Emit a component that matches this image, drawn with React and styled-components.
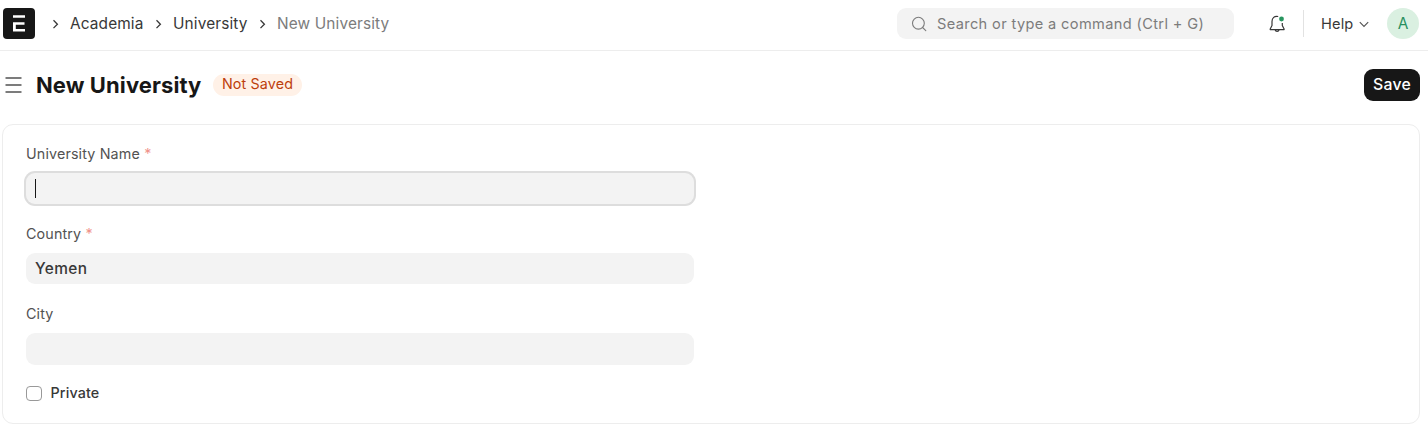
import React from "react";
import styled, { createGlobalStyle } from "styled-components";

const Global = createGlobalStyle`
  * { box-sizing: border-box; }
  body {
    margin: 0;
    background: #fff;
    color: #383838;
    font-family: Inter, "Liberation Sans", sans-serif;
    font-size: 14.3px;
    letter-spacing: 0.15px;
    line-height: 20px;
  }
`;

const Page = styled.div`
  width: 100%;
  min-height: 432px;
  overflow: hidden;
`;

const Navbar = styled.header`
  display: flex;
  align-items: center;
  height: 51px;
  padding: 0 9px 4px 3px;
  border-bottom: 1px solid #ededed;
`;

const Logo = styled.svg`
  display: block;
  width: 32px;
  height: 31px;
`;

const Crumbs = styled.nav`
  display: flex;
  align-items: center;
  margin-left: 17px;
  padding-top: 1px;
  font-size: 15.4px;
  letter-spacing: 0.13px;
`;

const Crumb = styled.span`
  display: flex;
  align-items: center;
  width: ${(p) => p.$width};
  white-space: nowrap;
  color: ${(p) => (p.$current ? "#7c7c7c" : "#383838")};
`;

const CrumbArrow = styled.svg`
  width: 7px;
  height: 10px;
  margin-right: 11px;
  flex: none;
`;

const SearchBox = styled.div`
  display: flex;
  align-items: center;
  width: 337px;
  height: 31px;
  margin-left: auto;
  padding: 1px 0 0 14px;
  border-radius: 9px;
  background: #f3f3f3;
  color: #7c7c7c;
  font-size: 14.6px;
  letter-spacing: 0.36px;
  white-space: nowrap;
`;

const SearchIcon = styled.svg`
  width: 16px;
  height: 16px;
  margin-right: 10px;
`;

const Bell = styled.svg`
  width: 18px;
  height: 20px;
  margin: 2px 0 0 34px;
`;

const Divider = styled.div`
  width: 1px;
  height: 27px;
  margin: 0 17px 0 17px;
  background: #e2e2e2;
`;

const HelpMenu = styled.div`
  display: flex;
  align-items: center;
  width: 66px;
  padding-top: 1px;
  font-size: 14.6px;
`;

const HelpArrow = styled.svg`
  width: 10px;
  height: 7px;
  margin: 2px 0 0 6px;
`;

const Avatar = styled.div`
  width: 32px;
  height: 31px;
  border-radius: 50%;
  background: #daf0e1;
  color: #278f5e;
  font-size: 15.4px;
  line-height: 31px;
  text-align: center;
  letter-spacing: 0;
`;

const PageHead = styled.div`
  display: flex;
  align-items: center;
  height: 73px;
  padding: 0 8px 5px 5px;
`;

const MenuIcon = styled.svg`
  width: 17px;
  height: 18px;
  margin-right: 14px;
`;

const Title = styled.h1`
  margin: 0;
  width: 177px;
  color: #171717;
  font-size: 22px;
  font-weight: 700;
  line-height: 28px;
  letter-spacing: 0.09px;
  white-space: nowrap;
`;

const Status = styled.span`
  height: 22px;
  width: 89px;
  margin-top: -1px;
  border-radius: 11px;
  background: #fff1e7;
  color: #bd3e0c;
  line-height: 20px;
  text-align: center;
  white-space: nowrap;
`;

const SaveButton = styled.button`
  width: 56px;
  height: 32px;
  margin-left: auto;
  padding: 0;
  border: 0;
  border-radius: 9px;
  background: #171717;
  color: #fff;
  font: 500 15.8px/32px Inter, "Liberation Sans", sans-serif;
  letter-spacing: 0.2px;
`;

const Card = styled.section`
  height: 300px;
  margin: 0 8px 0 2px;
  padding: 19px 23px;
  border: 1px solid #ededed;
  border-radius: 11px;
`;

const Field = styled.div`
  width: 668px;
  height: 80px;
`;

const Label = styled.label`
  display: block;
  height: 29px;
  color: #525252;
`;

const Required = styled.span`
  color: #f0938b;
`;

const Input = styled.div`
  display: flex;
  align-items: center;
  height: ${(p) => p.$height};
  padding-left: 9px;
  border-radius: 9px;
  background: #f3f3f3;
  color: #383838;
  font-size: 15.4px;
  font-weight: 500;
  letter-spacing: 0.4px;
  box-shadow: ${(p) => (p.$focused ? "0 0 0 2px #dddddd" : "none")};
`;

const Caret = styled.span`
  width: 1px;
  height: 19px;
  background: #171717;
`;

const CheckRow = styled.label`
  display: flex;
  align-items: center;
  height: 20px;
  margin-top: -1px;
  font-weight: 500;
`;

const Checkbox = styled.span`
  width: 16px;
  height: 15px;
  margin: 1px 8.500px 0 0;
  border: 1px solid #999;
  border-radius: 4px;
  background: #fff;
`;

const crumbs = [
  { text: "Academia", width: "103px" },
  { text: "University", width: "104px" },
  { text: "New University", width: "auto", current: true },
];

const fields = [
  { label: "University Name", required: true, focused: true, height: "31px" },
  { label: "Country", required: true, value: "Yemen", height: "31px" },
  { label: "City", height: "32px" },
];

export default function App() {
  return (
    <Page>
      <Global />
      <Navbar>
        <Logo viewBox="0 0 32 31">
          <rect width="32" height="31" rx="4" fill="#171717" />
          <path d="M10 7.3h12v2.5H10zM10 14.2h11.5v2.5h-8.700v4.200H22v2.500H10z" fill="#fff" />
        </Logo>
        <Crumbs>
          {crumbs.map((c) => (
            <Crumb key={c.text} $width={c.width} $current={c.current}>
              <CrumbArrow viewBox="0 0 7 10">
                <path d="M1.500 1.300 5.400 5.200 1.500 9.100" fill="none" stroke="#383838" strokeWidth="1.300" />
              </CrumbArrow>
              {c.text}
            </Crumb>
          ))}
        </Crumbs>
        <SearchBox>
          <SearchIcon viewBox="0 0 16 16" fill="none" stroke="#7c7c7c" strokeWidth="1.100">
            <circle cx="7.400" cy="7.200" r="5.900" />
            <path d="m11.600 11.500 3.200 3.200" strokeLinecap="round" />
          </SearchIcon>
          Search or type a command (Ctrl + G)
        </SearchBox>
        <Bell viewBox="0 0 18 20" fill="none">
          <path d="M10.200 2.500C6.300 1.600 4 4 4 7.500v3.900L2.200 15v.6h13.900V15l-1.800-3.600V9" stroke="#383838" strokeWidth="1.200" strokeLinejoin="round" />
          <path d="M7.200 16c.4 1.700 3.400 1.700 3.800 0" stroke="#383838" strokeWidth="1.200" />
          <circle cx="13.500" cy="5" r="2.400" fill="#28955f" />
        </Bell>
        <Divider />
        <HelpMenu>
          Help
          <HelpArrow viewBox="0 0 10 7">
            <path d="M.8 1.200 5 5.400l4.200-4.200" fill="none" stroke="#525252" strokeWidth="1.100" />
          </HelpArrow>
        </HelpMenu>
        <Avatar>A</Avatar>
      </Navbar>
      <PageHead>
        <MenuIcon viewBox="0 0 17 18">
          <path d="M.5 2h16M.5 9h16M.5 16h16" stroke="#525252" strokeWidth="1.300" />
        </MenuIcon>
        <Title>New University</Title>
        <Status>Not Saved</Status>
        <SaveButton>Save</SaveButton>
      </PageHead>
      <Card>
        {fields.map((f) => (
          <Field key={f.label}>
            <Label>
              {f.label} {f.required && <Required>*</Required>}
            </Label>
            <Input $focused={f.focused} $height={f.height}>
              {f.focused && <Caret />}
              {f.value}
            </Input>
          </Field>
        ))}
        <CheckRow>
          <Checkbox />
          Private
        </CheckRow>
      </Card>
    </Page>
  );
}
